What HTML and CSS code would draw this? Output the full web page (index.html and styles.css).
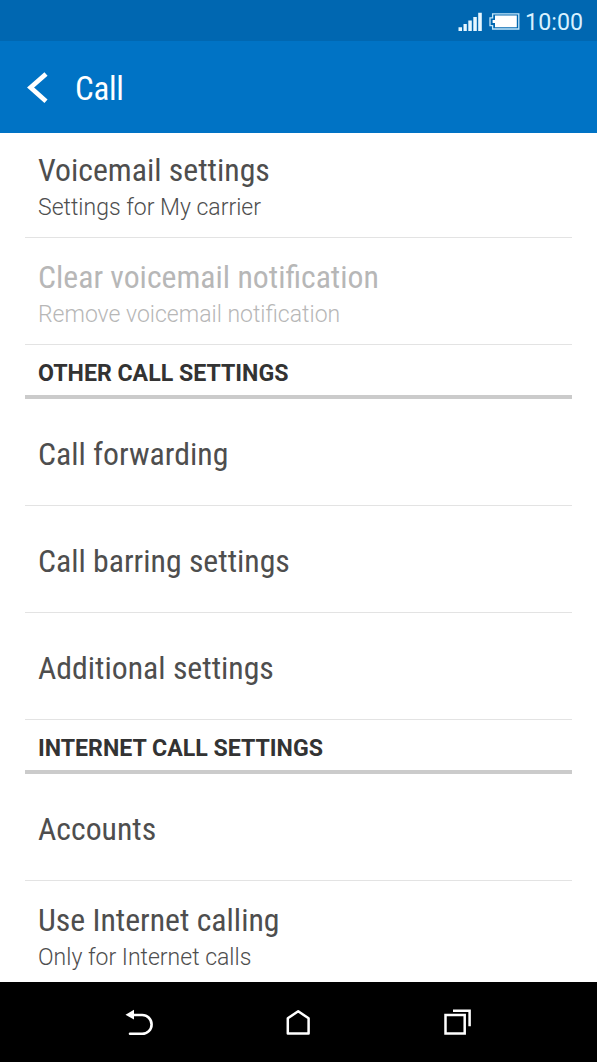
FILE: index.html
```html
<!DOCTYPE html>
<html lang="en">
<head>
<meta charset="utf-8">
<title>Call</title>
<link rel="stylesheet" href="styles.css">
</head>
<body>
<div class="screen">
  <div class="status">
    <svg class="signal" width="24" height="20" viewBox="0 0 24 20"><path fill="#e6f7ff" d="M.5 15.200h3.500V19H.5zM5.500 12h3.300v7H5.500zM10.300 8.500h3.500V19h-3.500zM15.300 5h3.500v14h-3.500zM20.200.8h3.600V19h-3.600z"/></svg>
    <svg class="battery" width="31" height="17" viewBox="0 0 31 17"><path fill="none" stroke="#c2e6fa" stroke-width="1.300" d="M3.600.8h26.200v15.200H3.600v-3.400H1V4.800h2.600z"/><path fill="#fff" d="M6 2.500h21.800v11.800H6V9.900H3.600V7H6z"/></svg>
    <span class="clock">10:00</span>
  </div>
  <header class="bar">
    <svg class="back" width="22" height="32" viewBox="0 0 22 32"><path fill="none" stroke="#fff" stroke-width="4.700" d="M19 2L3.600 15.600 19 29.200"/></svg>
    <h1 class="heading">Call</h1>
  </header>
  <main class="list">
    <div class="row first"><div class="title">Voicemail settings</div><div class="sub">Settings for My carrier</div></div>
    <div class="row disabled"><div class="title">Clear voicemail notification</div><div class="sub">Remove voicemail notification</div></div>
    <h2 class="section">OTHER CALL SETTINGS</h2>
    <div class="row single"><div class="title">Call forwarding</div></div>
    <div class="row single"><div class="title">Call barring settings</div></div>
    <div class="row single"><div class="title">Additional settings</div></div>
    <h2 class="section">INTERNET CALL SETTINGS</h2>
    <div class="row single"><div class="title">Accounts</div></div>
    <div class="row last"><div class="title">Use Internet calling</div><div class="sub">Only for Internet calls</div></div>
  </main>
  <nav class="nav">
    <svg width="30" height="30" viewBox="0 0 30 30"><path fill="none" stroke="#fff" stroke-width="2.600" stroke-linecap="round" d="M6 7h12.200a9.400 9.400 0 0 1 0 18.800H6"/><path fill="#fff" d="M1.500 6.800L10 1.800v9.800z"/></svg>
    <svg width="30" height="30" viewBox="0 0 30 30"><path fill="none" stroke="#fff" stroke-width="2.500" stroke-linejoin="round" d="M4.800 25.400V10.300L15.200 3.300 25.600 10.300V25.400z"/></svg>
    <svg width="30" height="30" viewBox="0 0 30 30"><path fill="none" stroke="#fff" stroke-width="2.500" d="M3.500 7h19.200v18.500H3.500zM11 2.800h16.600v15.500"/></svg>
  </nav>
</div>
</body>
</html>
```

FILE: styles.css
```css
body { margin: 0; background: #fff; font-family: Roboto, "Liberation Sans", sans-serif; }
.screen { display: flex; flex-direction: column; height: 1062px; overflow: hidden; }
.status { display: flex; height: 41px; background: #0067b1; color: #d8f1ff; box-sizing: border-box; padding-left: 458px; }
.signal { margin-top: 12px; }
.battery { margin: 13px 0 0 7px; }
.clock { margin-left: 5px; font-size: 23.2px; line-height: 44px; letter-spacing: 0.1px; }
.bar { display: flex; height: 92px; background: #0073c5; color: #fff; }
.back { margin: 31px 0 0 27px; }
.heading { margin: 28px 0 0 26px; font: 400 33px/39px "Roboto Condensed", Roboto, sans-serif; letter-spacing: -0.3px; }
.list { height: 849px; padding: 0 25px; }
.row { box-sizing: border-box; height: 107px; padding: 20px 13px 0; border-bottom: 1px solid #e3e3e3; color: #4e4e4e; }
.first { height: 105px; padding-top: 18px; }
.single { padding-top: 36px; }
.last { height: 101px; border-bottom: 0; }
.disabled { color: #b7b7b7; }
.title { font: 400 31.75px/39px "Roboto Condensed", Roboto, sans-serif; }
.sub { margin-top: 4px; font-size: 23px; line-height: 28px; font-weight: 300; }
.section { box-sizing: border-box; height: 54px; margin: 0; padding: 15px 13px 0; border-bottom: 4px solid #cbcbcb; color: #333; font-size: 23.15px; line-height: 28px; font-weight: 700; }
.nav { display: flex; height: 80px; box-sizing: border-box; padding: 26px 0 0 124px; gap: 129px; background: #000; }
```
